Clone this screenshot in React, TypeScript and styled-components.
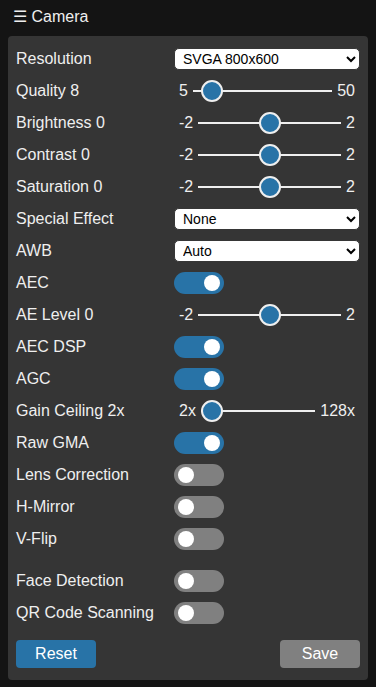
import { useState } from "react";
import styled, { createGlobalStyle } from "styled-components";

const GlobalStyle = createGlobalStyle`
	html, body {
		margin: 0;
		padding: 0;
		background: #141414;
	}
	body {
		font-family: "Liberation Sans", Arial, Helvetica, sans-serif;
		font-size: 16px;
		color: #efefef;
	}
`;

type RangeItem = { kind: "range"; label: string; min: number; max: number; value: number; minText?: string; maxText?: string; showValue?: string };
type SelectItem = { kind: "select"; label: string; options: string[]; value: string };
type SwitchItem = { kind: "switch"; label: string; on: boolean; spaced?: boolean };
type Item = RangeItem | SelectItem | SwitchItem;

const items: Item[] = [
	{
		kind: "select",
		label: "Resolution",
		options: ["UXGA 1600x1200", "SXGA 1280x1024", "HD 1280x720", "XGA 1024x768", "SVGA 800x600", "VGA 640x480", "CIF 400x296", "QVGA 320x240"],
		value: "SVGA 800x600",
	},
	{ kind: "range", label: "Quality", min: 5, max: 50, value: 8 },
	{ kind: "range", label: "Brightness", min: -2, max: 2, value: 0 },
	{ kind: "range", label: "Contrast", min: -2, max: 2, value: 0 },
	{ kind: "range", label: "Saturation", min: -2, max: 2, value: 0 },
	{
		kind: "select",
		label: "Special Effect",
		options: ["None", "Negative", "Grayscale", "Red Tint", "Green Tint", "Blue Tint", "Sepia"],
		value: "None",
	},
	{ kind: "select", label: "AWB", options: ["Auto", "Sunny", "Cloudy", "Office", "Home"], value: "Auto" },
	{ kind: "switch", label: "AEC", on: true },
	{ kind: "range", label: "AE Level", min: -2, max: 2, value: 0 },
	{ kind: "switch", label: "AEC DSP", on: true },
	{ kind: "switch", label: "AGC", on: true },
	{ kind: "range", label: "Gain Ceiling", min: 0, max: 6, value: 0, minText: "2x", maxText: "128x", showValue: "2x" },
	{ kind: "switch", label: "Raw GMA", on: true },
	{ kind: "switch", label: "Lens Correction", on: false },
	{ kind: "switch", label: "H-Mirror", on: false },
	{ kind: "switch", label: "V-Flip", on: false },
	{ kind: "switch", label: "Face Detection", on: false, spaced: true },
	{ kind: "switch", label: "QR Code Scanning", on: false },
];

const App = () => {
	const [values, setValues] = useState<Record<string, number | string | boolean>>(() => {
		const v: Record<string, number | string | boolean> = {};
		items.forEach((it) => {
			v[it.label] = it.kind === "switch" ? it.on : it.value;
		});
		return v;
	});

	const handleChange = (label: string, value: number | string | boolean) => {
		setValues({ ...values, [label]: value });
	};

	const renderControl = (it: Item) => {
		if (it.kind === "select") {
			return (
				<Select value={values[it.label] as string} onChange={(e) => handleChange(it.label, e.target.value)}>
					{it.options.map((o) => (
						<option key={o}>{o}</option>
					))}
				</Select>
			);
		}
		if (it.kind === "range") {
			return (
				<RangeBox>
					<RangeEdge>{it.minText ?? it.min}</RangeEdge>
					<Range
						type="range"
						min={it.min}
						max={it.max}
						value={values[it.label] as number}
						onChange={(e) => handleChange(it.label, Number(e.target.value))}
					/>
					<RangeEdge>{it.maxText ?? it.max}</RangeEdge>
				</RangeBox>
			);
		}
		const on = values[it.label] as boolean;
		return <Switch $on={on} onClick={() => handleChange(it.label, !on)} />;
	};

	const labelText = (it: Item) => {
		if (it.kind !== "range") return it.label;
		if (it.showValue) {
			const v = values[it.label] as number;
			return `${it.label} ${Math.pow(2, v + 1)}x`;
		}
		return `${it.label} ${values[it.label]}`;
	};

	return (
		<Page>
			<GlobalStyle />
			<Header>☰ Camera</Header>
			<Panel>
				{items.map((it) => (
					<Row key={it.label} $spaced={it.kind === "switch" && !!it.spaced}>
						<Label>{labelText(it)}</Label>
						{renderControl(it)}
					</Row>
				))}
				<ButtonBar>
					<Button $tone="primary">Reset</Button>
					<Button $tone="muted">Save</Button>
				</ButtonBar>
			</Panel>
		</Page>
	);
};

export default App;

const BLUE = "#2873a7";

const Page = styled.div`
	padding: 0 8px 8px;
`;

const Header = styled.div`
	height: 36px;
	line-height: 34px;
	padding-left: 5px;
	cursor: pointer;
	white-space: pre;
`;

const Panel = styled.div`
	display: flex;
	flex-direction: column;
	gap: 10px;
	background: #353535;
	border-radius: 4px;
	padding: 12px 8px;
`;

const Row = styled.div<{ $spaced: boolean }>`
	display: flex;
	align-items: center;
	height: 22px;
	line-height: 22px;
	margin-top: ${(p) => (p.$spaced ? "10px" : "0")};
`;

const Label = styled.label`
	width: 158px;
	flex-shrink: 0;
	white-space: nowrap;
`;

const Select = styled.select`
	flex-grow: 1;
	height: 22px;
	border: 1px solid #363636;
	border-radius: 5px;
	background: #ffffff;
	color: #000000;
	font-family: "Liberation Sans", Arial, sans-serif;
	font-size: 14px;
	padding: 0 4px;
	outline: 0;
`;

const RangeBox = styled.div`
	flex-grow: 1;
	display: flex;
	align-items: center;
	min-width: 0;
`;

const RangeEdge = styled.span`
	flex-shrink: 0;
	padding: 0 5px;
`;

const Range = styled.input`
	-webkit-appearance: none;
	appearance: none;
	flex: 1 1 0;
	width: 0;
	min-width: 0;
	height: 22px;
	margin: 0;
	background: transparent;
	cursor: pointer;

	&::-webkit-slider-runnable-track {
		height: 2px;
		background: #efefef;
		border: 0;
	}

	&::-webkit-slider-thumb {
		-webkit-appearance: none;
		box-sizing: border-box;
		width: 22px;
		height: 22px;
		border-radius: 50%;
		border: 2px solid #efefef;
		background: ${BLUE};
		margin-top: -10px;
	}

	&::-moz-range-track {
		height: 2px;
		background: #efefef;
	}

	&::-moz-range-thumb {
		box-sizing: border-box;
		width: 22px;
		height: 22px;
		border-radius: 50%;
		border: 2px solid #efefef;
		background: ${BLUE};
	}
`;

const Switch = styled.div<{ $on: boolean }>`
	position: relative;
	width: 50px;
	height: 22px;
	border-radius: 22px;
	cursor: pointer;
	background: ${(p) => (p.$on ? BLUE : "grey")};

	&::before {
		content: "";
		position: absolute;
		top: 3px;
		left: ${(p) => (p.$on ? "30px" : "4px")};
		width: 16px;
		height: 16px;
		border-radius: 50%;
		background: #ffffff;
	}
`;

const ButtonBar = styled.div`
	display: flex;
	justify-content: space-between;
	margin-top: 6px;
`;

const Button = styled.button<{ $tone: "primary" | "muted" }>`
	width: 80px;
	height: 28px;
	padding: 0 12px;
	border: 0;
	border-radius: 4px;
	cursor: pointer;
	color: #ffffff;
	font-family: "Liberation Sans", Arial, sans-serif;
	font-size: 16px;
	background: ${(p) => (p.$tone === "primary" ? BLUE : "grey")};
`;
